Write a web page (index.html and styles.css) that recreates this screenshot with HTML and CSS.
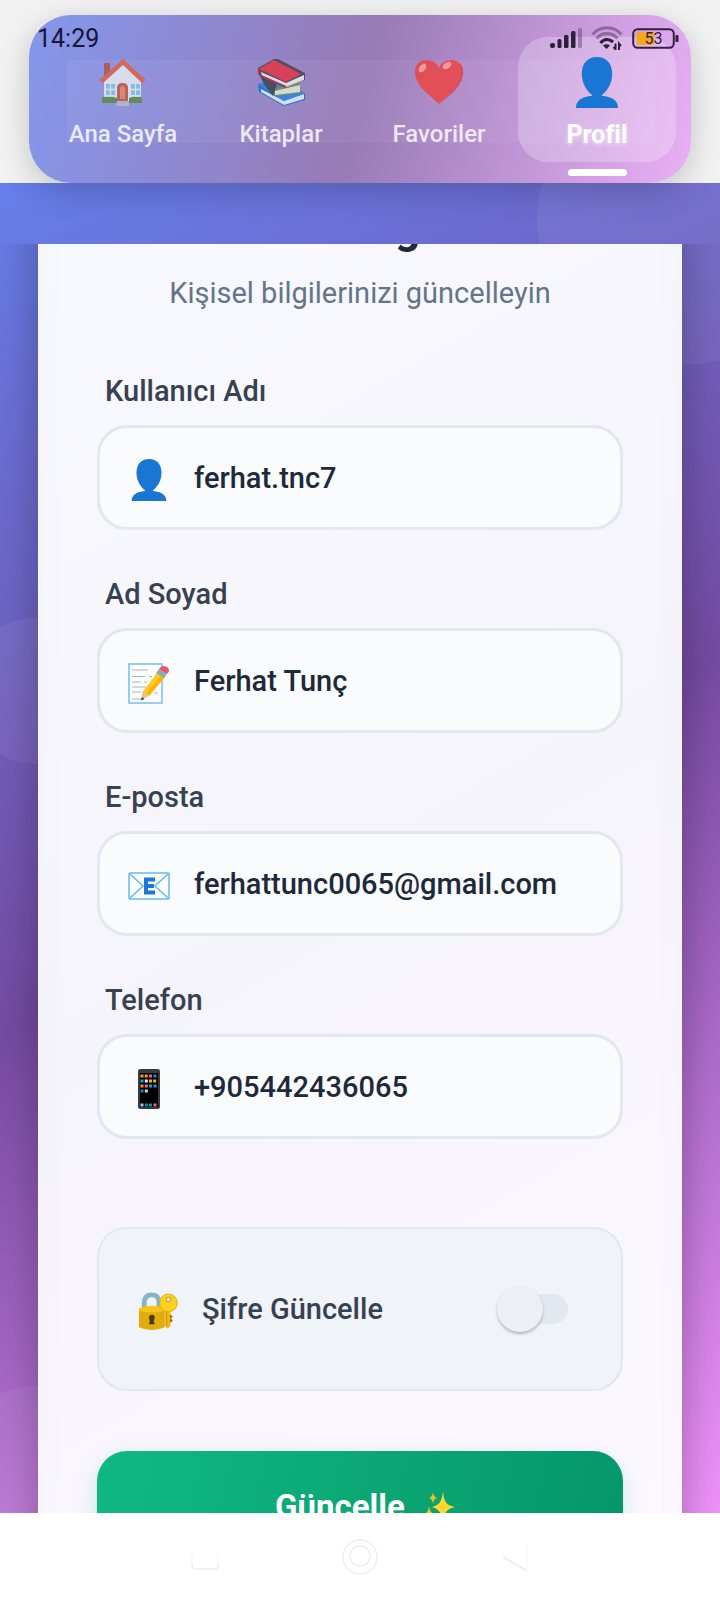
FILE: index.html
```html
<!DOCTYPE html>
<html lang="tr">
<head>
<meta charset="utf-8">
<meta name="viewport" content="width=device-width, initial-scale=1">
<title>Profil</title>
<link rel="stylesheet" href="styles.css">
</head>
<body>
<svg width="0" height="0" class="defs" aria-hidden="true">
  <symbol id="user" viewBox="0 0 44 52">
    <path fill="#1976d2" d="M22 0C32 0 37.500 7 37.500 17C37.500 28 31 36 27 38.500V39.500C37 40.500 43.500 44 43.500 52H.5C.5 44 7 40.500 17 39.500V38.500C13 36 6.500 28 6.500 17C6.500 7 12 0 22 0Z"/>
  </symbol>
</svg>
<div class="screen">
  <header class="top">
    <div class="status">
      <time>14:29</time>
      <div class="status-icons">
        <svg width="32" height="22" viewBox="0 0 32 22" fill="#2e1f3d">
          <rect x="0" y="16" width="5" height="5" rx="2"/><rect x="7.500" y="12" width="4" height="9" rx="1.500"/><rect x="14" y="8" width="4.500" height="13" rx="1.500"/><rect x="21" y="4" width="4.500" height="17" rx="1.500"/><rect x="28" y="1" width="4" height="20" rx="1.500" opacity=".35"/>
        </svg>
        <svg width="32" height="24" viewBox="0 0 32 24" fill="none" stroke="#2e1f3d" stroke-width="3.200">
          <path d="M1.500 8.500C9-.5 23-.5 30.500 8.500" opacity=".4"/><path d="M5.500 12.500C11 6 21 6 26.500 12.500" opacity=".4"/><path d="M9.500 17C13 12.500 18 12.500 22 16"/>
          <path d="M12 19.500Q15.500 17 19 19.500L15.500 23Z" fill="#2e1f3d" stroke="none"/>
          <path d="M24.500 17.500V23.500L22.500 21M28 24V17.500L30 20" stroke-width="2"/>
        </svg>
        <svg width="47" height="21" viewBox="0 0 47 21">
          <rect x="4.500" y="4" width="18" height="13" rx="2" fill="#f5a623"/>
          <rect x="1.200" y="1.200" width="40.600" height="18.600" rx="4.500" fill="none" stroke="#33203f" stroke-width="2"/>
          <rect x="43.500" y="7" width="3" height="7" rx="1" fill="#33203f"/>
          <text x="21.500" y="16" text-anchor="middle" class="battery-text">53</text>
        </svg>
      </div>
    </div>
    <nav class="nav" aria-label="Ana menü">
      <a class="nav-item" href="#home">
        <svg class="nav-icon dim" viewBox="0 0 48 48">
          <path fill="#b0503c" d="M5 4H11V20H5Z"/>
          <path fill="#eceff1" d="M5 20L24 4L42 20V42H5Z"/>
          <path fill="#e2603c" d="M24 0L47 21L43 24L24 6L4 24L0 21Z"/>
          <path fill="#c8553d" d="M18 42V29Q18 24 23.500 24Q29 24 29 29V42Z"/>
          <path fill="#e2895d" d="M21 29Q23.500 24 26 29V40H21Z"/>
          <path fill="#82c8e6" d="M7 25H16V36H7ZM32 25H41V36H32Z"/>
          <path stroke="#eceff1" stroke-width="1.300" d="M11.500 25V36M7 30.500H16M36.500 25V36M32 30.500H41"/>
          <path fill="#558b3f" d="M3 39Q5 37 8 38Q13 37 18 39V44H3ZM30 39Q34 37 38 38Q42 37 43 39V44H30Z"/>
          <path fill="#b0bec5" d="M18 42H30V47H17Z"/>
        </svg>
        <span>Ana Sayfa</span>
      </a>
      <a class="nav-item" href="#books">
        <svg class="nav-icon dim" viewBox="0 0 48 48">
          <path fill="#0d6fc4" d="M1 25L27 42L48 34V41L27 47L2 33Z"/>
          <path fill="#e3f2fd" d="M4 30L27 42L47 35V40L27 46L4 33Z"/>
          <path fill="#1e88e5" d="M1 25L20 18L48 34L27 42Z"/>
          <path fill="#69983c" d="M16 30L43 23V26L44 34L18 37Z"/>
          <path fill="#e4edda" d="M18 32L43 26V33L18 36Z"/>
          <path fill="#354046" d="M3 17L20 25L16 37L8 27Z"/>
          <path fill="#424242" d="M1 9L17 0L21 0L48 14V21L29 28L4 17Z"/>
          <path fill="#eceff1" d="M4 13L29 24L47 16V21L29 28L5 17Z"/>
          <path fill="#ea2f3e" d="M2 10L17 1L44 15L29 23Z"/>
          <path fill="none" stroke="#b61c31" stroke-width="2" d="M2 10Q1 14 4 17L29 28"/>
        </svg>
        <span>Kitaplar</span>
      </a>
      <a class="nav-item" href="#favorites">
        <svg class="nav-icon dim" viewBox="0 0 48 48">
          <path fill="#f0413c" d="M24 45C16 37 0 27 0 13C0 5 5 1 12 1C18 1 22 4 24 9C26 4 30 1 36 1C43 1 48 5 48 13C48 27 32 37 24 45Z"/>
          <path fill="#c73a48" opacity=".5" d="M42 3Q51 12 42 26Q36 35 24 45Q49 28 48 13Q48 6 42 3Z"/>
          <ellipse cx="7.500" cy="9" rx="3" ry="5" transform="rotate(35 7.500 9)" fill="#ff9e9a"/>
          <ellipse cx="32" cy="6.500" rx="3" ry="5" transform="rotate(55 32 6.500)" fill="#ff9e9a"/>
        </svg>
        <span>Favoriler</span>
      </a>
      <a class="nav-item active" href="#profile" aria-current="page">
        <svg class="nav-icon big"><use href="#user"/></svg>
        <span>Profil</span>
      </a>
    </nav>
  </header>

  <main class="app">
    <i class="bubble b1"></i><i class="bubble b2"></i><i class="bubble b3"></i>
    <div class="scroll">
      <form class="card">
        <h1>Profil Bilgileri</h1>
        <p class="subtitle">Kişisel bilgilerinizi güncelleyin</p>

        <div class="field">
          <label for="username">Kullanıcı Adı</label>
          <div class="box">
            <svg class="icon"><use href="#user"/></svg>
            <input id="username" type="text" value="ferhat.tnc7">
          </div>
        </div>
        <div class="field">
          <label for="fullname">Ad Soyad</label>
          <div class="box">
            <svg class="icon" viewBox="0 0 42 42">
              <rect x="1" y="2" width="33" height="39" fill="#fcfdfe" stroke="#68b9ea" stroke-width="1.400"/>
              <path stroke="#aab3ba" stroke-width="1" d="M4 8H20M4 14.500H17M21 14.500H24M4 20H13M16 20H19M4 25H18M4 30H13M4 37H16M26 31H30"/>
              <path fill="#ffb300" d="M30 10L37 15L21 34L14 31Z"/>
              <path fill="#ffca28" d="M30 10L34 12L18 32L14 31Z"/>
              <path fill="#e6c391" d="M15 29L21 34L13 38Z"/><path fill="#37474f" d="M14 35L16.500 37L13 38.500Z"/>
              <path fill="#82aebd" d="M28 11L31 7L39 12L36 16Z"/>
              <path fill="#ef5368" d="M31 7Q34 2 39 5Q43 8 39 12Z"/>
            </svg>
            <input id="fullname" type="text" value="Ferhat Tunç">
          </div>
        </div>
        <div class="field">
          <label for="email">E-posta</label>
          <div class="box">
            <svg class="icon" viewBox="0 0 42 42">
              <rect x="1" y="8" width="40" height="26" rx="1" fill="#fafdff" stroke="#68b9ea" stroke-width="1.500"/>
              <path fill="none" stroke="#68b9ea" stroke-width="1.500" d="M2 9L15 21L2 33M40 9L27 21L40 33"/>
              <path fill="none" stroke="#1e78d6" stroke-width="4" d="M27 14.500H18V27.500H27M18 21H26"/>
            </svg>
            <input id="email" type="email" value="ferhattunc0065@gmail.com">
          </div>
        </div>
        <div class="field">
          <label for="phone">Telefon</label>
          <div class="box">
            <svg class="icon" viewBox="0 0 42 42">
              <rect x="10" y="1" width="22" height="40" rx="2.500" fill="#3a3a3c"/>
              <rect x="12" y="5" width="18" height="34" fill="#000"/>
              <g stroke-width="3" stroke-dasharray="3 1.200">
                <path stroke="#ff9c3a" d="M12.500 8H20"/><path stroke="#ee5d8f" d="M21 8H24"/><path stroke="#1e88e5" d="M25.500 8H29"/>
                <path stroke="#26a69a" d="M12.500 13H16"/><path stroke="#e3f2fd" d="M16.800 13H20"/><path stroke="#ffa726" d="M21 13H29"/>
                <path stroke="#ff8a3c" d="M12.500 18H16"/><path stroke="#ec6c90" d="M16.800 18H20"/><path stroke="#26a69a" d="M21 18H24"/><path stroke="#2196f3" d="M25.500 18H29"/>
                <path stroke="#0288d1" d="M12.500 23H16"/><path stroke="#b3e0f2" d="M16.800 23H20"/>
                <path stroke="#90caf9" d="M12.500 37H16"/><path stroke="#0097a7" d="M16.800 37H24"/><path stroke="#ec6c90" d="M25.500 37H29"/>
              </g>
            </svg>
            <input id="phone" type="tel" value="+905442436065">
          </div>
        </div>

        <div class="toggle">
          <svg class="icon" viewBox="0 0 42 42">
            <path fill="none" stroke="#84b4c6" stroke-width="5" d="M6.500 18V12Q7 4 14.500 4Q22 4 22 12V18"/>
            <path fill="#f5c518" d="M1 18Q14 13 28 18V37Q14 44 1 37Z"/>
            <path fill="#e2ab10" d="M1 21Q14 24 28 21V38Q14 44 1 38Z"/>
            <circle cx="14.500" cy="28" r="3" fill="#483b1c"/><path fill="#483b1c" d="M13 29H16L17.500 35H11.500Z"/>
            <path fill="#f5b80f" d="M28.500 19H34V37L31 39.500L28.500 37Z"/><path stroke="#d69409" stroke-width="1.300" d="M30 21V37M34 25L36 27L34 29L36 31L34 33"/>
            <circle cx="32" cy="12.500" r="9.300" fill="#ffd024" stroke="#e3a90c" stroke-width="1"/><circle cx="32" cy="9" r="2.500" fill="#f5edc8" stroke="#c8940c"/>
          </svg>
          <label for="pw">Şifre Güncelle</label>
          <input id="pw" type="checkbox" role="switch" class="switch">
        </div>

        <button class="submit" type="submit">
          <span>Güncelle</span>
          <svg width="32" height="32" viewBox="0 0 32 32">
            <path fill="#ffd52e" d="M18 0C19 11 21 14 30 16C21 18 19 22 18 32C17 22 14 18 7 16C14 14 17 11 18 0Z"/>
            <path fill="#f2c018" d="M8 1Q8.500 6 12 7Q8.500 8 8 13Q7.500 8 4 7Q7.500 6 8 1ZM4 15Q5 22 9 23Q5 24 4 31Q3 24 0 23Q3 22 4 15Z"/>
          </svg>
        </button>
      </form>
    </div>
  </main>

  <footer class="sysbar">
    <button type="button" aria-label="Son uygulamalar"><svg width="40" height="40" viewBox="0 0 40 40"><path d="M7 10V28Q7 32 11 32H29Q33 32 33 28V10" fill="none" stroke="url(#fade)" stroke-width="1.500"/><defs><linearGradient id="fade" x1="0" y1="10" x2="0" y2="32" gradientUnits="userSpaceOnUse"><stop offset="0" stop-color="#fefefe"/><stop offset=".6" stop-color="#f8f8f8"/><stop offset="1" stop-color="#ebebeb"/></linearGradient></defs></svg></button>
    <button type="button" aria-label="Ana ekran"><svg width="40" height="40" viewBox="0 0 40 40" fill="none" stroke="#efefef" stroke-width="1.500"><circle cx="20" cy="20" r="17"/><circle cx="20" cy="19" r="10"/></svg></button>
    <button type="button" aria-label="Geri"><svg width="40" height="40" viewBox="0 0 40 40" fill="none"><path d="M8 20L32 34" stroke="#ebebeb" stroke-width="1.500"/><path d="M32 34V7" stroke="#f8f8f8" stroke-width="1.500"/></svg></button>
  </footer>
</div>
</body>
</html>
```

FILE: styles.css
```css
* { box-sizing: border-box; }
body {
  margin: 0;
  font-family: Roboto, "Noto Sans", sans-serif;
  background: #fff;
}
.defs { position: absolute; }
.screen {
  height: 100vh;
  display: flex;
  flex-direction: column;
  overflow: hidden;
}

/* Top navigation with the status bar over it */
.top {
  position: relative;
  z-index: 2;
  padding: 15px 29px 0;
  background: #f2f2f2;
}
.status {
  position: absolute;
  z-index: 2;
  top: 24px;
  left: 37px;
  right: 41px;
  display: flex;
  justify-content: space-between;
}
.status time {
  font-size: 25px;
  line-height: 30px;
  color: #16163a;
}
.status-icons {
  display: flex;
  align-items: center;
  gap: 9px;
  height: 28px;
}
.battery-text {
  font-size: 16px;
  fill: #33203f;
}
.nav {
  position: relative;
  display: grid;
  grid-template-columns: repeat(4, 1fr);
  padding: 22px 15px 21px;
  border-radius: 42px;
  background: linear-gradient(104deg, #8497ec 0%, #987ab6 50%, #e9b0f5 100%);
  box-shadow: 0 8px 32px rgba(0, 0, 0, .2);
}
.nav::before {
  content: "";
  position: absolute;
  inset: 45px 36px 40px 38px;
  background: rgba(255, 255, 255, .05);
}
.nav-item {
  position: relative;
  display: flex;
  flex-direction: column;
  align-items: center;
  gap: 12px;
  padding: 22px 0 13px;
  border-radius: 30px;
  font-size: 24px;
  line-height: 30px;
  font-weight: 500;
  color: rgba(255, 255, 255, .82);
  text-decoration: none;
}
.nav-icon {
  width: 48px;
  height: 48px;
}
.nav-icon.dim { opacity: .8; }
.nav-item.active {
  padding-top: 20px;
  padding-bottom: 12px;
  background: rgba(255, 255, 255, .24);
  color: #fff;
  font-size: 25px;
  font-weight: 700;
  text-shadow: 0 2px 4px rgba(255, 255, 255, .5);
}
.nav-icon.big { height: 51px; }
.nav-item.active::after {
  content: "";
  position: absolute;
  bottom: -14px;
  width: 59px;
  height: 7px;
  border-radius: 4px;
  background: #fff;
}

/* Gradient area */
.app {
  position: relative;
  flex: 1;
  min-height: 0;
  padding-top: 61px;
  overflow: hidden;
  background: linear-gradient(152deg, #667eea 0%, #764ba2 50%, #f093fb 100%);
}
.bubble {
  position: absolute;
  border-radius: 50%;
  background: rgba(255, 255, 255, .06);
}
.b1 { width: 290px; height: 290px; right: -107px; top: -108px; }
.b2 { width: 146px; height: 146px; left: -37px; top: 435px; }
.b3 { width: 300px; height: 300px; left: -100px; bottom: -172px; }
.scroll {
  position: relative;
  height: 100%;
  padding: 0 38px;
  overflow: hidden;
}
.card {
  padding: 0 58px;
  border: solid rgba(255, 255, 255, .3);
  border-width: 0 1px;
  background: linear-gradient(150deg, #f8f9fe 0%, #f5f4fa 50%, #fdf8ff 100%);
  box-shadow: 0 0 40px rgba(0, 0, 0, .3), inset 0 0 45px rgba(0, 0, 0, .02);
}
h1 {
  margin: -40px 0 0;
  font-size: 44px;
  line-height: 48px;
  font-weight: 700;
  text-align: center;
  color: #1e293b;
}
.subtitle {
  margin: 21px 0 0;
  font-size: 29px;
  line-height: 40px;
  text-align: center;
  color: #64748b;
}
.field { padding-top: 52px; }
.subtitle + .field { padding-top: 66px; }
label {
  display: block;
  font-size: 29px;
  line-height: 36px;
  font-weight: 500;
  color: #374151;
}
.field label {
  margin: 0 0 22px 8px;
  line-height: 24px;
}
.box {
  display: flex;
  align-items: center;
  gap: 24px;
  height: 105px;
  padding: 0 28px;
  border: 3px solid #e2e8f0;
  border-radius: 30px;
  background: #f9fbfd;
}
.icon {
  flex: none;
  width: 42px;
  height: 42px;
  margin-top: 4px;
}
.box input {
  flex: 1;
  min-width: 0;
  padding: 0;
  border: 0;
  outline: 0;
  background: none;
  font: 500 29px/40px Roboto, "Noto Sans", sans-serif;
  color: #1e293b;
}
.toggle {
  display: flex;
  align-items: center;
  height: 164px;
  margin-top: 88px;
  padding: 0 53px 0 39px;
  border: 2px solid #e2e8f0;
  border-radius: 30px;
  background: #f0f4f9;
}
.toggle .icon {
  width: 40px;
  height: 40px;
}
.toggle label { margin-left: 24px; }
.switch {
  appearance: none;
  position: relative;
  width: 64px;
  height: 30px;
  margin: 0 0 0 auto;
  border-radius: 15px;
  background: #e2e8f0;
}
.switch::before {
  content: "";
  position: absolute;
  left: -7px;
  top: -8px;
  width: 46px;
  height: 46px;
  border-radius: 50%;
  background: #eceff3;
  box-shadow: 0 2px 3px rgba(0, 0, 0, .25);
}
.submit {
  display: flex;
  justify-content: center;
  align-items: center;
  gap: 20px;
  width: 100%;
  height: 112px;
  margin-top: 60px;
  padding: 0 0 0 12px;
  border: 0;
  border-radius: 30px;
  background: linear-gradient(104deg, #10b981, #059669);
  box-shadow: 0 8px 24px rgba(16, 185, 129, .2);
  font: 700 33px/40px Roboto, "Noto Sans", sans-serif;
  color: #fff;
}

/* System navigation */
.sysbar {
  position: relative;
  display: flex;
  justify-content: center;
  gap: 115px;
  height: 87px;
  align-items: center;
  background: #fff;
}
.sysbar button {
  display: flex;
  padding: 0;
  border: 0;
  background: none;
}
```
